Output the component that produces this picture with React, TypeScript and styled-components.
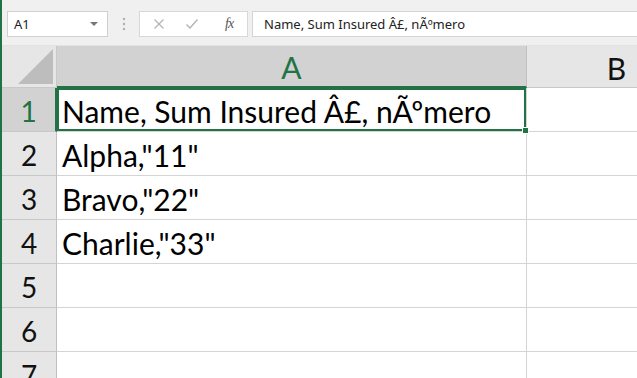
import React from 'react';
import styled, {createGlobalStyle, css} from 'styled-components';

const GlobalStyle = createGlobalStyle`
  html, body {
    margin: 0;
    padding: 0;
    background: #ffffff;
    overflow: hidden;
  }
`

const Window = styled.div`
  width: 637px;
  height: 378px;
  overflow: hidden;
  box-sizing: border-box;
  border-left: 2px solid #217346;
  background: #ffffff;
  display: flex;
  flex-direction: column;
`

const Toolbar = styled.div`
  height: 46px;
  flex-shrink: 0;
  box-sizing: border-box;
  padding: 11px 0 0 5px;
  background: #f0f0f0;
  border-bottom: 1px solid #e2e2e2;
  display: flex;
  align-items: flex-start;
`

const NameBox = styled.div`
  width: 101px;
  height: 26px;
  box-sizing: border-box;
  background: #ffffff;
  border: 1px solid #d0d0d0;
  display: flex;
  align-items: center;
  justify-content: space-between;
  padding: 0 9px 0 6px;
  font-family: "Noto Sans", sans-serif;
  font-size: 13px;
  color: #222;
`

const Caret = styled.span`
  width: 0;
  height: 0;
  border-left: 4px solid transparent;
  border-right: 4px solid transparent;
  border-top: 4px solid #777;
`

const Grip = styled.div`
  width: 31px;
  height: 26px;
  display: flex;
  align-items: center;
  justify-content: center;
`

const FormulaButtons = styled.div`
  width: 109px;
  height: 26px;
  box-sizing: border-box;
  background: #ffffff;
  border: 1px solid #d8d8d8;
  display: flex;
  align-items: center;
  padding-left: 13px;
  gap: 20px;
`

const Fx = styled.span`
  font-family: "Liberation Serif", serif;
  font-style: italic;
  font-size: 14px;
  color: #555;
  margin-left: 6px;
  letter-spacing: -1px;
`

const FormulaInput = styled.div`
  flex: 1;
  height: 26px;
  margin-left: 4px;
  box-sizing: border-box;
  background: #ffffff;
  border: 1px solid #d4d4d4;
  border-right: none;
  display: flex;
  align-items: center;
  padding-left: 11px;
  font-family: "Noto Sans", sans-serif;
  font-size: 13px;
  color: #222;
  white-space: nowrap;
`

const Sheet = styled.div`
  flex: 1;
  display: grid;
  grid-template-columns: 55px 470px 180px;
  grid-template-rows: 42px repeat(7, 44px);
  background: #ffffff;
`

const Corner = styled.div`
  background: #e6e6e6;
  border-right: 1px solid #c8c8c8;
  border-bottom: 1px solid #c8c8c8;
  display: flex;
  align-items: flex-end;
  justify-content: flex-end;
  padding: 0 3px 3px 0;
  box-sizing: border-box;
`

const ColHeader = styled.div<{ $active?: boolean }>`
  box-sizing: border-box;
  background: ${p => p.$active ? '#d2d2d2' : '#e6e6e6'};
  border-right: 1px solid #c0c0c0;
  border-bottom: ${p => p.$active ? '2px solid #217346' : '1px solid #c8c8c8'};
  display: flex;
  align-items: center;
  justify-content: center;
  padding-top: 2px;
  font-family: Lato, "Liberation Sans", sans-serif;
  font-size: 30px;
  color: ${p => p.$active ? '#217346' : '#111'};
`

const RowHeader = styled.div<{ $active?: boolean }>`
  box-sizing: border-box;
  background: ${p => p.$active ? '#d2d2d2' : '#e6e6e6'};
  border-bottom: 1px solid #c8c8c8;
  border-right: ${p => p.$active ? '2px solid #217346' : '1px solid #c0c0c0'};
  display: flex;
  align-items: center;
  justify-content: center;
  padding-top: 2px;
  font-family: Lato, "Liberation Sans", sans-serif;
  font-size: 28px;
  color: ${p => p.$active ? '#217346' : '#111'};
`

const Cell = styled.div<{ $selected?: boolean }>`
  box-sizing: border-box;
  border-right: 1px solid #d4d4d4;
  border-bottom: 1px solid #d4d4d4;
  display: flex;
  align-items: center;
  padding: 2px 0 0 5px;
  font-family: Lato, "Liberation Sans", sans-serif;
  font-size: 30px;
  color: #000;
  white-space: nowrap;
  position: relative;
  ${p => p.$selected && css`
    box-shadow: inset 0 0 0 2px #217346;
    &::after {
      content: '';
      position: absolute;
      right: -3px;
      bottom: -3px;
      width: 5px;
      height: 5px;
      background: #217346;
      border: 1px solid #ffffff;
      z-index: 2;
    }
  `}
`

const rows = [
    'Name, Sum Insured Â£, nÃºmero',
    'Alpha,"11"',
    'Bravo,"22"',
    'Charlie,"33"',
    '',
    '',
    '',
]

const App = () => {
    return (
        <Window>
            <GlobalStyle/>
            <Toolbar>
                <NameBox>A1<Caret/></NameBox>
                <Grip>
                    <svg width="4" height="14" viewBox="0 0 4 14">
                        <circle cx="2" cy="2" r="1.2" fill="#b0b0b0"/>
                        <circle cx="2" cy="7" r="1.2" fill="#b0b0b0"/>
                        <circle cx="2" cy="12" r="1.2" fill="#b0b0b0"/>
                    </svg>
                </Grip>
                <FormulaButtons>
                    <svg width="12" height="12" viewBox="0 0 12 12">
                        <path d="M1.5 1.5L10.5 10.5M10.5 1.5L1.5 10.5" stroke="#b4b4b4" strokeWidth="1.3"/>
                    </svg>
                    <svg width="14" height="12" viewBox="0 0 14 12">
                        <path d="M1.5 6.5L5 10L12.5 1.5" stroke="#b4b4b4" strokeWidth="1.4" fill="none"/>
                    </svg>
                    <Fx>fx</Fx>
                </FormulaButtons>
                <FormulaInput>{rows[0]}</FormulaInput>
            </Toolbar>
            <Sheet>
                <Corner>
                    <svg width="35" height="35" viewBox="0 0 35 35">
                        <path d="M35 0V35H0Z" fill="#bdbdbd"/>
                    </svg>
                </Corner>
                <ColHeader $active>A</ColHeader>
                <ColHeader>B</ColHeader>
                {rows.map((text, i) => (
                    <React.Fragment key={i}>
                        <RowHeader $active={i === 0}>{i + 1}</RowHeader>
                        <Cell $selected={i === 0}>{text}</Cell>
                        <Cell/>
                    </React.Fragment>
                ))}
            </Sheet>
        </Window>
    )
}

export default App;
